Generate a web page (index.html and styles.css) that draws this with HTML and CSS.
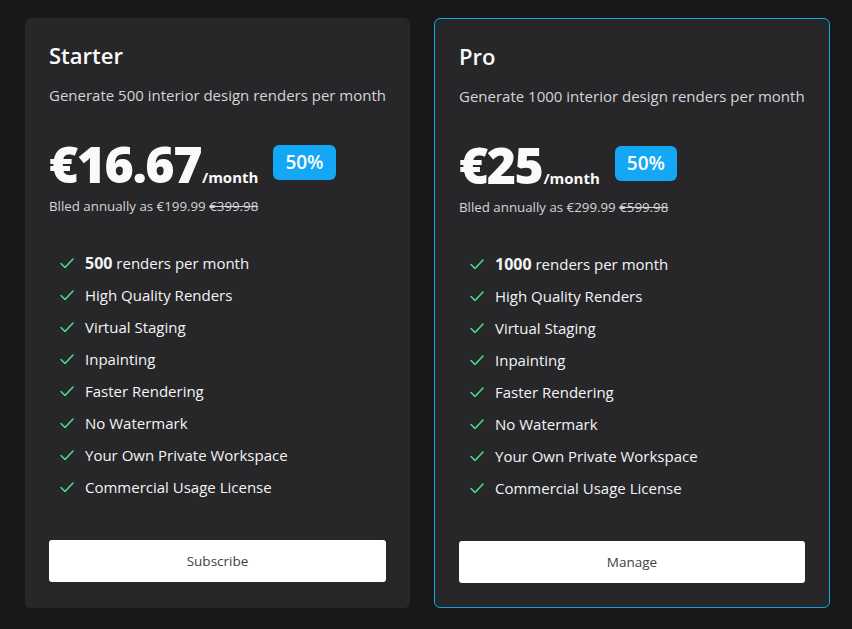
FILE: index.html
```html
<!DOCTYPE html>
<html lang="en">
<head>
<meta charset="utf-8">
<title>Pricing</title>
<link rel="stylesheet" href="styles.css">
</head>
<body>
<div class="plans">
  <div class="card starter">
    <h2 class="title">Starter</h2>
    <p class="desc">Generate 500 interior design renders per month</p>
    <div class="price-row">
      <span class="price">€16.67</span><span class="per">/month</span>
      <span class="badge">50%</span>
    </div>
    <p class="billed">Blled annually as €199.99 <s>€399.98</s></p>
    <ul class="features">
      <li><svg class="check" viewBox="0 0 16 16"><path d="M2 8.5l4 4 8-8.5"/></svg><span><b>500</b> renders per month</span></li>
      <li><svg class="check" viewBox="0 0 16 16"><path d="M2 8.5l4 4 8-8.5"/></svg><span>High Quality Renders</span></li>
      <li><svg class="check" viewBox="0 0 16 16"><path d="M2 8.5l4 4 8-8.5"/></svg><span>Virtual Staging</span></li>
      <li><svg class="check" viewBox="0 0 16 16"><path d="M2 8.5l4 4 8-8.5"/></svg><span>Inpainting</span></li>
      <li><svg class="check" viewBox="0 0 16 16"><path d="M2 8.5l4 4 8-8.5"/></svg><span>Faster Rendering</span></li>
      <li><svg class="check" viewBox="0 0 16 16"><path d="M2 8.5l4 4 8-8.5"/></svg><span>No Watermark</span></li>
      <li><svg class="check" viewBox="0 0 16 16"><path d="M2 8.5l4 4 8-8.5"/></svg><span>Your Own Private Workspace</span></li>
      <li><svg class="check" viewBox="0 0 16 16"><path d="M2 8.5l4 4 8-8.5"/></svg><span>Commercial Usage License</span></li>
    </ul>
    <button class="btn">Subscribe</button>
  </div>
  <div class="card pro">
    <h2 class="title">Pro</h2>
    <p class="desc">Generate 1000 interior design renders per month</p>
    <div class="price-row">
      <span class="price">€25</span><span class="per">/month</span>
      <span class="badge">50%</span>
    </div>
    <p class="billed">Blled annually as €299.99 <s>€599.98</s></p>
    <ul class="features">
      <li><svg class="check" viewBox="0 0 16 16"><path d="M2 8.5l4 4 8-8.5"/></svg><span><b>1000</b> renders per month</span></li>
      <li><svg class="check" viewBox="0 0 16 16"><path d="M2 8.5l4 4 8-8.5"/></svg><span>High Quality Renders</span></li>
      <li><svg class="check" viewBox="0 0 16 16"><path d="M2 8.5l4 4 8-8.5"/></svg><span>Virtual Staging</span></li>
      <li><svg class="check" viewBox="0 0 16 16"><path d="M2 8.5l4 4 8-8.5"/></svg><span>Inpainting</span></li>
      <li><svg class="check" viewBox="0 0 16 16"><path d="M2 8.5l4 4 8-8.5"/></svg><span>Faster Rendering</span></li>
      <li><svg class="check" viewBox="0 0 16 16"><path d="M2 8.5l4 4 8-8.5"/></svg><span>No Watermark</span></li>
      <li><svg class="check" viewBox="0 0 16 16"><path d="M2 8.5l4 4 8-8.5"/></svg><span>Your Own Private Workspace</span></li>
      <li><svg class="check" viewBox="0 0 16 16"><path d="M2 8.5l4 4 8-8.5"/></svg><span>Commercial Usage License</span></li>
    </ul>
    <button class="btn">Manage</button>
  </div>
</div>
</body>
</html>
```
FILE: styles.css
```css
* { box-sizing: border-box; }
html, body { margin: 0; }
body {
  background: #18181b;
  font-family: "Open Sans", "Noto Sans", sans-serif;
  color: #fafafa;
  width: 852px;
  height: 629px;
  overflow: hidden;
}
.plans {
  display: flex;
  gap: 24px;
  padding: 18px 0 0 25px;
}
.card {
  background: #27272a;
  border-radius: 6px;
  padding: 23px 24px 26px;
  height: 590px;
  display: flex;
  flex-direction: column;
}
.starter { width: 385px; }
.pro {
  width: 396px;
  border: 1px solid #0ea5e9;
  padding-bottom: 24px;
}
.title {
  margin: 0;
  font-size: 22px;
  font-weight: 600;
  line-height: 28px;
  color: #fafafa;
}
.desc {
  margin: 15px 0 0;
  font-size: 15px;
  line-height: 22px;
  color: #d4d4d8;
  white-space: nowrap;
}
.price-row {
  display: flex;
  align-items: baseline;
  margin-top: 33px;
  height: 50px;
}
.price {
  font-size: 50px;
  font-weight: 800;
  line-height: 50px;
  letter-spacing: -1.5px;
}
.per {
  font-size: 15px;
  font-weight: 700;
  line-height: 20px;
  margin-left: 1px;
}
.badge {
  align-self: flex-start;
  margin-left: 15px;
  margin-top: 6px;
  background: #13a7f5;
  color: #fff;
  border-radius: 6px;
  font-size: 19px;
  font-weight: 600;
  line-height: 35px;
  padding: 0 12px;
}
.billed {
  margin: 8px 0 0;
  font-size: 13.3px;
  line-height: 18px;
  color: #d4d4d8;
}
.billed s { color: #d4d4d8; }
.features {
  list-style: none;
  margin: 37px 0 0;
  padding: 0 0 0 10px;
  display: flex;
  flex-direction: column;
  gap: 10px;
}
.features li {
  display: flex;
  align-items: center;
  gap: 10px;
  font-size: 15px;
  line-height: 22px;
  color: #f4f4f5;
}
.features b { font-weight: 700; font-size: 16px; }
.check {
  width: 16px;
  height: 16px;
  fill: none;
  stroke: #4ade80;
  stroke-width: 1.6;
  stroke-linecap: round;
  stroke-linejoin: round;
}
.btn {
  margin-top: auto;
  height: 42px;
  width: 100%;
  background: #fff;
  border: 0;
  border-radius: 3px;
  font-family: inherit;
  font-size: 13.5px;
  font-weight: 500;
  color: #3f3f46;
}
```
